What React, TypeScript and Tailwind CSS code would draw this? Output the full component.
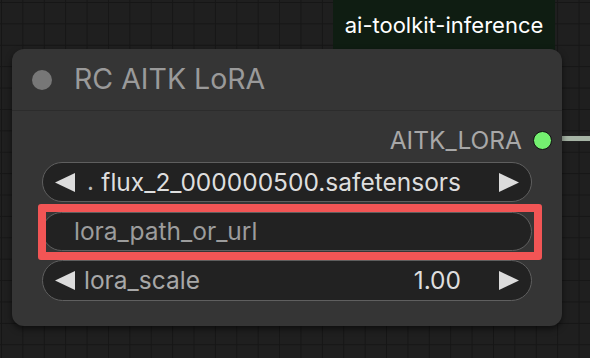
import React from "react";

const LeftArrow = () => (
  <svg width="20" height="19" viewBox="0 0 20 19" className="shrink-0">
    <path d="M0 9.5 L20 0 L20 19 Z" fill="#dcdcdc" />
  </svg>
);

const RightArrow = () => (
  <svg width="20" height="19" viewBox="0 0 20 19" className="shrink-0">
    <path d="M20 9.5 L0 0 L0 19 Z" fill="#dcdcdc" />
  </svg>
);

export default function App() {
  return (
    <div
      className="relative w-[590px] h-[358px] overflow-hidden bg-[#1f1f1f] bg-[linear-gradient(to_right,#161616_1px,transparent_1px),linear-gradient(to_bottom,#161616_1px,transparent_1px)] bg-[size:21.4px_21.4px] bg-[position:1px_2px]"
      style={{ fontFamily: "Inter, 'Noto Sans', sans-serif" }}
    >
      {/* group label */}
      <div className="absolute left-[333px] top-0 w-[222px] h-[50px] bg-[#0f1d12] flex items-center justify-center pb-[1px]">
        <span className="text-[22px] leading-none text-white">ai-toolkit-inference</span>
      </div>

      {/* output link */}
      <div className="absolute left-[560px] top-[135px] w-[40px] h-[7px] bg-[#a6b4a5] border-y border-[#222]" />

      {/* node */}
      <div className="absolute left-[12px] top-[49px] w-[550px] h-[277px] rounded-[12px] bg-[#353535] shadow-[0_3px_6px_rgba(0,0,0,0.55)] flex flex-col">
        <div className="h-[62px] flex items-center border-b border-[#2c2c2c] pl-[20px]">
          <div className="w-[20px] h-[20px] rounded-full bg-[#777]" />
          <span className="ml-[22px] text-[28.5px] leading-none text-[#9a9a9a]">RC AITK LoRA</span>
        </div>

        <div className="flex-1 flex flex-col px-[30px] pt-[15px]">
          <div className="h-[28px] flex items-center justify-end -mr-[20px]">
            <span className="text-[24.5px] leading-none text-[#a8a8a8]">AITK_LORA</span>
            <div className="ml-[11px] shrink-0 w-[19px] h-[19px] rounded-full bg-[#74f070] border-[1.5px] border-[#111]" />
          </div>

          <div className="mt-[8px] h-[40px] flex items-center rounded-full border-[1.5px] border-[#5f5f5f] bg-[#222] px-[12px]">
            <LeftArrow />
            <span className="ml-[12px] text-[24px] leading-none text-[#bbb]">.</span>
            <span className="flex-1 text-right text-[24.5px] leading-none text-[#dedede] whitespace-nowrap">flux_2_000000500.safetensors</span>
            <span className="w-[38px]" />
            <RightArrow />
          </div>

          <div className="relative mt-[10px] h-[39px] flex items-center rounded-full border-[1.5px] border-[#5f5f5f] bg-[#222] pl-[31px]">
            <span className="text-[24.5px] leading-none text-[#9c9c9c]">lora_path_or_url</span>
            <div className="absolute left-[-5px] top-[-9px] w-[504px] h-[56px] rounded-[3px] border-[8px] border-[#f25555]" />
          </div>

          <div className="mt-[9px] h-[41px] flex items-center rounded-full border-[1.5px] border-[#5f5f5f] bg-[#222] px-[12px]">
            <LeftArrow />
            <span className="ml-[9px] text-[24.5px] leading-none text-[#a8a8a8]">lora_scale</span>
            <span className="flex-1 text-right text-[24.5px] leading-none text-[#dedede]">1.00</span>
            <span className="w-[38px]" />
            <RightArrow />
          </div>
        </div>
      </div>
    </div>
  );
}
